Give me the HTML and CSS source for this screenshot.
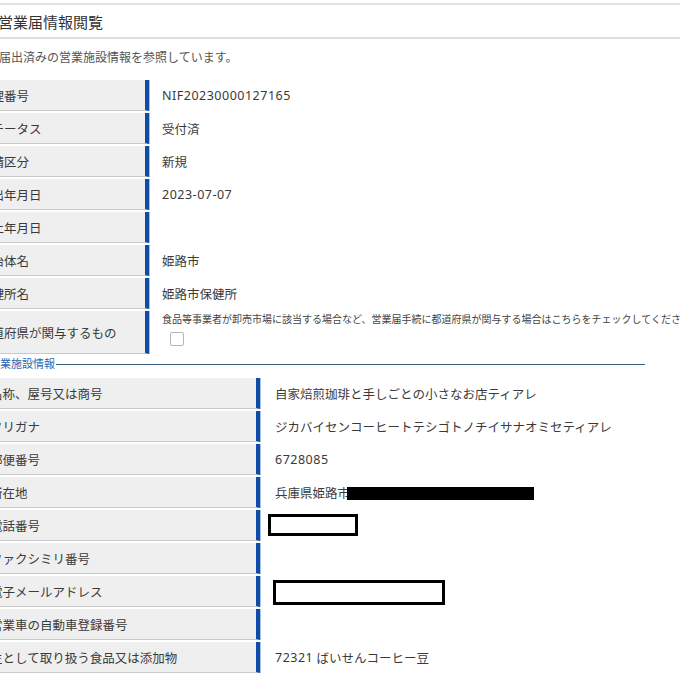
FILE: index.html
```html
<!DOCTYPE html>
<html lang="ja">
    <head>
        <meta charset="utf-8">
        <meta name="viewport" content="width=device-width, initial-scale=1.0">
        <title>営業届情報閲覧</title>
        <link rel="stylesheet" href="styles.css">
    </head>
    <body>
        <div class="page">
            <div class="page__head">
                <h1 class="page__title">営業届情報閲覧</h1>
            </div>
            <p class="page__lead">届出済みの営業施設情報を参照しています。</p>

            <dl class="info info--base">
                <dt>受理番号</dt>
                <dd class="is-code">NIF20230000127165</dd>
                <dt>ステータス</dt>
                <dd>受付済</dd>
                <dt>申請区分</dt>
                <dd>新規</dd>
                <dt>届出年月日</dt>
                <dd class="is-code">2023-07-07</dd>
                <dt>廃止年月日</dt>
                <dd></dd>
                <dt>自治体名</dt>
                <dd>姫路市</dd>
                <dt>保健所名</dt>
                <dd>姫路市保健所</dd>
                <dt class="is-tall">都道府県が関与するもの</dt>
                <dd class="is-tall">
                    <span class="note">食品等事業者が卸売市場に該当する場合など、営業届手続に都道府県が関与する場合はこちらをチェックしてください。</span>
                    <span class="checkbox"></span>
                </dd>
            </dl>

            <div class="section">
                <span class="section__title">営業施設情報</span>
                <span class="section__rule"></span>
            </div>

            <dl class="info info--facility">
                <dt>名称、屋号又は商号</dt>
                <dd>自家焙煎珈琲と手しごとの小さなお店ティアレ</dd>
                <dt>フリガナ</dt>
                <dd>ジカバイセンコーヒートテシゴトノチイサナオミセティアレ</dd>
                <dt>郵便番号</dt>
                <dd class="is-code">6728085</dd>
                <dt>所在地</dt>
                <dd>兵庫県姫路市<span class="redact redact--fill"></span></dd>
                <dt>電話番号</dt>
                <dd><span class="redact redact--phone"></span></dd>
                <dt>ファクシミリ番号</dt>
                <dd></dd>
                <dt>電子メールアドレス</dt>
                <dd><span class="redact redact--mail"></span></dd>
                <dt>営業車の自動車登録番号</dt>
                <dd></dd>
                <dt>主として取り扱う食品又は添加物</dt>
                <dd><span class="is-code">72321</span>&nbsp;ばいせんコーヒー豆</dd>
            </dl>
        </div>
    </body>
</html>
```

FILE: styles.css
```css
body {
    margin: 0;
    background: #fff;
    color: #333;
    font-family: "Noto Sans", "Noto Sans CJK JP", sans-serif;
    overflow: hidden;
}
.page {
    margin-left: -30px;
    width: 740px;
    padding-top: 3px;
}
.page__head {
    border-top: 2px solid #e2e2e2;
    border-bottom: 2px solid #dedede;
    height: 32px;
    display: flex;
    align-items: center;
    padding-left: 28px;
}
.page__title {
    margin: 0;
    font-size: 15px;
    font-weight: normal;
    color: #333;
}
.page__lead {
    margin: 10px 0 0;
    padding-left: 29px;
    font-size: 12px;
    line-height: 18px;
    color: #555;
}
.info {
    display: grid;
    row-gap: 2px;
    margin: 0;
}
.info--base {
    margin-top: 13px;
    grid-template-columns: 179px 1fr;
}
.info--facility {
    margin-top: 6px;
    grid-template-columns: 290px 1fr;
}
.info dt,
.info dd {
    margin: 0;
    height: 30px;
    display: flex;
    align-items: center;
    font-size: 12.5px;
    white-space: nowrap;
}
.info dt {
    background: #efefef;
    border-bottom: 1px solid #c9c9c9;
    border-right: 4px solid #0f4ca6;
    box-shadow: 1px 0 0 #a9c0e4;
    color: #3a3a3a;
}
.info--base dt {
    padding-left: 9px;
}
.info--facility dt {
    padding-left: 20px;
}
.info dd {
    color: #3a3a3a;
    padding-bottom: 1px;
}
.info--base dd {
    padding-left: 13px;
}
.info--facility dd {
    padding-left: 15px;
}
.is-code {
    letter-spacing: 0.5px;
}
.info .is-tall {
    height: 42px;
}
.info dd.is-tall {
    flex-direction: column;
    align-items: flex-start;
    justify-content: flex-start;
    padding-top: 1px;
}
.note {
    font-size: 10px;
    line-height: 14px;
    color: #444;
}
.checkbox {
    display: block;
    width: 12px;
    height: 12px;
    margin: 6px 0 0 8px;
    border: 1px solid #b5b5b5;
    border-radius: 2px;
    background: #fff;
}
.section {
    display: flex;
    align-items: center;
    margin-top: 1px;
    width: 675px;
}
.section__title {
    padding-left: 19px;
    font-size: 11px;
    line-height: 16px;
    color: #2868b0;
}
.section__rule {
    flex: 1;
    height: 1px;
    margin-left: 1px;
    background: #3d5f80;
}
.redact {
    display: inline-block;
    box-sizing: border-box;
}
.redact--fill {
    width: 187px;
    height: 13px;
    background: #000;
    margin: 2px 0 0 -3px;
}
.redact--phone {
    width: 90px;
    height: 22px;
    border: 3px solid #000;
    margin-left: -7px;
}
.redact--mail {
    width: 172px;
    height: 25px;
    border: 3px solid #000;
    margin: 3px 0 0 -2px;
}
```
